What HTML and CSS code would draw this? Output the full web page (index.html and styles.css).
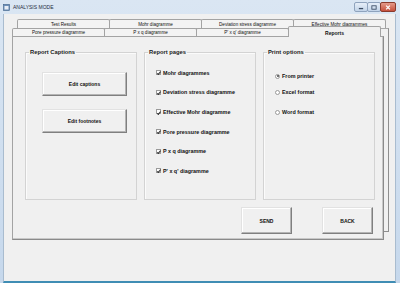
FILE: index.html
```html
<!DOCTYPE html>
<html>
<head>
<meta charset="utf-8">
<link rel="stylesheet" href="styles.css">
</head>
<body>
<div class="window">
  <div class="titlebar">
    <div class="title">
      <svg class="appicon" width="7" height="7" viewBox="0 0 7 7"><rect x="0.5" y="0.5" width="6" height="6" fill="#6c8fb8" stroke="#3d5f88" stroke-width="0.6"/><rect x="1.5" y="2" width="4" height="3.5" fill="#e8eef6"/></svg>
      <span>ANALYSIS MODE</span>
    </div>
    <div class="controls">
      <div class="ctl"><svg width="14" height="9" viewBox="0 0 14 9"><rect x="4.5" y="5" width="5" height="1.5" fill="#3b4b63"/></svg></div>
      <div class="ctl"><svg width="14" height="9" viewBox="0 0 14 9"><rect x="4.5" y="2.5" width="5" height="4" fill="none" stroke="#3b4b63" stroke-width="1"/></svg></div>
      <div class="ctl close"><svg width="15" height="9" viewBox="0 0 15 9"><path d="M5.5 2.5 L9.5 6.5 M9.5 2.5 L5.5 6.5" stroke="#fff" stroke-width="1.4"/></svg></div>
    </div>
  </div>
  <div class="client">
    <div class="tabctl">
      <div class="backframe"></div>
      <div class="tabrow row1">
        <div class="tab">Test Results</div>
        <div class="tab">Mohr diagramme</div>
        <div class="tab">Deviation stress diagramme</div>
        <div class="tab">Effective Mohr diagrammes</div>
      </div>
      <div class="tabrow row2">
        <div class="tab">Pore pressure diagramme</div>
        <div class="tab">P x q diagramme</div>
        <div class="tab">P' x q' diagramme</div>
        <div class="tab active">Reports</div>
      </div>
      <div class="panel">
        <div class="groups">
          <fieldset class="group">
            <legend>Report Captions</legend>
            <div class="inner captions">
              <button class="btn wide">Edit captions</button>
              <button class="btn wide">Edit footnotes</button>
            </div>
          </fieldset>
          <fieldset class="group">
            <legend>Report pages</legend>
            <div class="inner pages">
              <div class="check"><span class="cb"></span>Mohr diagrammes</div>
              <div class="check"><span class="cb"></span>Deviation stress diagramme</div>
              <div class="check"><span class="cb"></span>Effective Mohr diagramme</div>
              <div class="check"><span class="cb"></span>Pore pressure diagramme</div>
              <div class="check"><span class="cb"></span>P x q diagramme</div>
              <div class="check"><span class="cb"></span>P' x q' diagramme</div>
            </div>
          </fieldset>
          <fieldset class="group">
            <legend>Print options</legend>
            <div class="inner print">
              <div class="radio r1"><span class="rb on"></span>From printer</div>
              <div class="radio r2"><span class="rb"></span>Excel format</div>
              <div class="radio r3"><span class="rb"></span>Word format</div>
            </div>
          </fieldset>
        </div>
        <div class="actions">
          <button class="btn act">SEND</button>
          <button class="btn act">BACK</button>
        </div>
      </div>
    </div>
  </div>
</div>
</body>
</html>
```
FILE: styles.css
```css
* { box-sizing: border-box; }
html, body { margin: 0; padding: 0; }
body {
  width: 400px; height: 283px; overflow: hidden;
  font-family: "Liberation Sans", Arial, sans-serif;
  background: #c4d6ea;
}
.window {
  width: 400px; height: 283px;
  display: flex; flex-direction: column;
  background: linear-gradient(#dae6f3, #c6d8ec);
}
.titlebar {
  height: 14px; flex: none;
  display: flex; justify-content: space-between; align-items: flex-start;
  padding: 2px 4px 0 3px;
}
.title { display: flex; align-items: center; gap: 3px; height: 10px; color: #1e2b3c; font-size: 5px; }
.controls { display: flex; }
.ctl {
  width: 14px; height: 10px;
  border: 1px solid #8fa3bd; margin-left: -1px;
  background: linear-gradient(#e6eef8, #c3d4e8);
  border-radius: 2px;
  display: flex; align-items: center; justify-content: center;
}
.ctl svg { display: block; }
.ctl.close { width: 16px; background: linear-gradient(#e49a8a, #c7503c); border-color: #8a3a2c; }
.client {
  flex: 1;
  margin: 0 4px 0 3px;
  background: #f0f0f0;
  border-left: 1px solid #a9bccf;
  border-right: 1px solid #a9bccf;
  border-bottom: 2px solid #3f8db4;
  padding-top: 5px;
}
.tabctl { position: relative; margin-left: 8px; width: 377px; }
.backframe {
  position: absolute; left: 5px; top: 9px; width: 372px; height: 204px;
  border: 1px solid #a8a8a8; border-right-color: #8e8e8e; border-bottom-color: #8e8e8e;
  background: #f0f0f0;
}
.tabrow { display: flex; position: relative; }
.row1 { margin-left: 5px; height: 9px; }
.row2 { height: 8px; z-index: 2; }
.tab {
  width: 93px; flex: none;
  margin-left: -1px;
  border: 1px solid #a3a3a3; border-bottom: none;
  border-radius: 2px 2px 0 0;
  background: #f3f3f3;
  font-size: 4.6px; color: #111;
  display: flex; align-items: center; justify-content: center;
  white-space: nowrap;
}
.tab:first-child { margin-left: 0; }
.row1 .tab { height: 9px; }
.row2 .tab { height: 8px; }
.row2 .tab.active {
  height: 11px; margin-top: -2px; margin-bottom: -1px;
  background: #f0f0f0; font-weight: bold; font-size: 5px;
  padding-top: 1px;
  position: relative; z-index: 3;
}
.panel {
  position: relative; z-index: 1;
  width: 372px; height: 204px;
  border: 1px solid #a3a3a3;
  border-right-color: #8a8a8a; border-bottom-color: #8a8a8a;
  box-shadow: inset -1px -1px 0 #c8c8c8;
  background: #f0f0f0;
  padding: 12px 0 0 12px;
}
.groups { display: flex; gap: 7px; }
.group {
  margin: 0; padding: 0;
  width: 112px; height: 151px;
  border: 1px solid #d3d3d3;
  box-shadow: inset 1px 1px 0 #fbfbfb;
  min-inline-size: 0;
}
.group legend {
  font-size: 5.8px; line-height: 7px; font-weight: bold; color: #1a1a1a;
  padding: 0 1px; margin-left: 3px;
}
.btn {
  font-family: "Liberation Sans", Arial, sans-serif;
  font-weight: bold; font-size: 5px; color: #111;
  background: #f0f0f0;
  border: 1px solid #e2e2e2;
  border-right: 1px solid #7f7f7f; border-bottom: 1px solid #7f7f7f;
  box-shadow: inset -1px -1px 0 #b4b4b4, inset 1px 1px 0 #fff;
  padding: 0; margin: 0;
  display: block;
}
.captions { display: flex; flex-direction: column; padding: 16px 0 0 16px; }
.btn.wide { width: 85px; height: 24px; }
.btn.wide + .btn.wide { margin-top: 13px; }
.pages { padding: 7px 0 0 11px; }
.check {
  height: 19.6px; display: flex; align-items: center; gap: 2px;
  font-size: 5.4px; font-weight: bold; color: #111; white-space: nowrap;
}
.cb {
  width: 5px; height: 5px; flex: none;
  border: 0.6px solid #9a9a9a; background: #fff;
  position: relative;
}
.cb::after {
  content: ""; position: absolute; left: 1.2px; top: 0.2px;
  width: 1.4px; height: 2.6px;
  border-right: 0.9px solid #333; border-bottom: 0.9px solid #333;
  transform: rotate(40deg);
}
.print { padding: 12px 0 0 11px; }
.radio {
  height: 16px; display: flex; align-items: center; gap: 2px;
  font-size: 5.4px; font-weight: bold; color: #111; white-space: nowrap;
}
.radio.r3 { margin-top: 4px; }
.rb {
  width: 5px; height: 5px; flex: none; border-radius: 50%;
  border: 0.6px solid #9a9a9a; background: #fff;
  display: flex; align-items: center; justify-content: center;
}
.rb.on::after { content: ""; width: 2px; height: 2px; border-radius: 50%; background: #444; }
.actions { display: flex; justify-content: flex-end; gap: 30px; margin-top: 7px; padding-right: 10px; }
.btn.act { width: 51px; height: 27px; }
```
